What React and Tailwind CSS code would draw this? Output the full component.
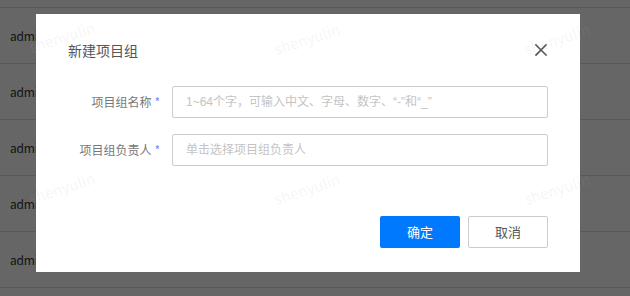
import { useState } from "react";

const rows = ["admin", "admin", "admin", "admin", "admin"];

function CloseIcon() {
  return (
    <svg width="14" height="14" viewBox="0 0 14 14" fill="none">
      <path d="M2 2L12 12M12 2L2 12" stroke="#555" strokeWidth="1.6" strokeLinecap="square" />
    </svg>
  );
}

function Field({ label, placeholder }) {
  return (
    <div className="flex items-center">
      <label className="w-[92px] shrink-0 text-right text-[12px] text-[#777]">
        {label}
        <span className="ml-[3px] text-[#6f8cff]">*</span>
      </label>
      <input
        className="ml-[12px] h-[32px] flex-1 rounded-[2px] border border-[#ccc] px-[13px] font-['Liberation_Sans','Noto_Sans_CJK_SC',sans-serif] text-[12px] outline-none placeholder:text-[#c4c4c4]"
        placeholder={placeholder}
      />
    </div>
  );
}

export default function App() {
  const [name, setName] = useState("");

  return (
    <div className="relative h-[296px] w-[630px] overflow-hidden bg-white font-['Noto_Sans_CJK_SC',sans-serif]">
      {/* table underneath */}
      <div className="pt-[7px]">
        {rows.map((r, i) => (
          <div key={i} className="flex h-[56px] items-center border-t border-[#ddd] pl-[10px] text-[12px] tracking-[-0.2px] text-[#333]">
            {r}istrator
          </div>
        ))}
        <div className="border-t border-[#ddd]"></div>
      </div>

      {/* mask + dialog */}
      <div className="absolute inset-0 bg-black/60">
        <div className="ml-[36px] mt-[14px] flex h-[258px] w-[544px] flex-col bg-white px-[32px] pb-[24px]">
          <div className="flex h-[72px] items-center justify-between">
            <h2 className="text-[14px] text-[#555]">新建项目组</h2>
            <button className="-mr-[1px] flex h-[16px] w-[16px] items-center justify-center">
              <CloseIcon />
            </button>
          </div>
          <div className="flex flex-col gap-[16px]">
            <Field label="项目组名称" placeholder={"1~64个字，可输入中文、字母、数字、\u201c-\u201d和\u201c_\u201d"} />
            <Field label="项目组负责人" placeholder="单击选择项目组负责人" />
          </div>
          <div className="mt-auto flex justify-end gap-[8px]">
            <button className="h-[32px] w-[80px] rounded-[2px] bg-[#0079fe] text-[13px] text-white">确定</button>
            <button className="h-[32px] w-[80px] rounded-[2px] border border-[#ccc] bg-white text-[13px] text-[#555]">取消</button>
          </div>
        </div>
      </div>

      {/* watermark layer */}
      <div className="pointer-events-none absolute inset-0 text-[15px] text-[rgba(170,170,170,0.12)]">
        <span className="absolute left-[12px] top-[26px] w-[100px] -rotate-[18deg] text-center">shenyulin</span>
        <span className="absolute left-[257px] top-[28px] w-[100px] -rotate-[18deg] text-center">shenyulin</span>
        <span className="absolute left-[507px] top-[28px] w-[100px] -rotate-[18deg] text-center">shenyulin</span>
        <span className="absolute left-[12px] top-[177px] w-[100px] -rotate-[18deg] text-center">shenyulin</span>
        <span className="absolute left-[257px] top-[178px] w-[100px] -rotate-[18deg] text-center">shenyulin</span>
        <span className="absolute left-[507px] top-[178px] w-[100px] -rotate-[18deg] text-center">shenyulin</span>
      </div>
    </div>
  );
}
